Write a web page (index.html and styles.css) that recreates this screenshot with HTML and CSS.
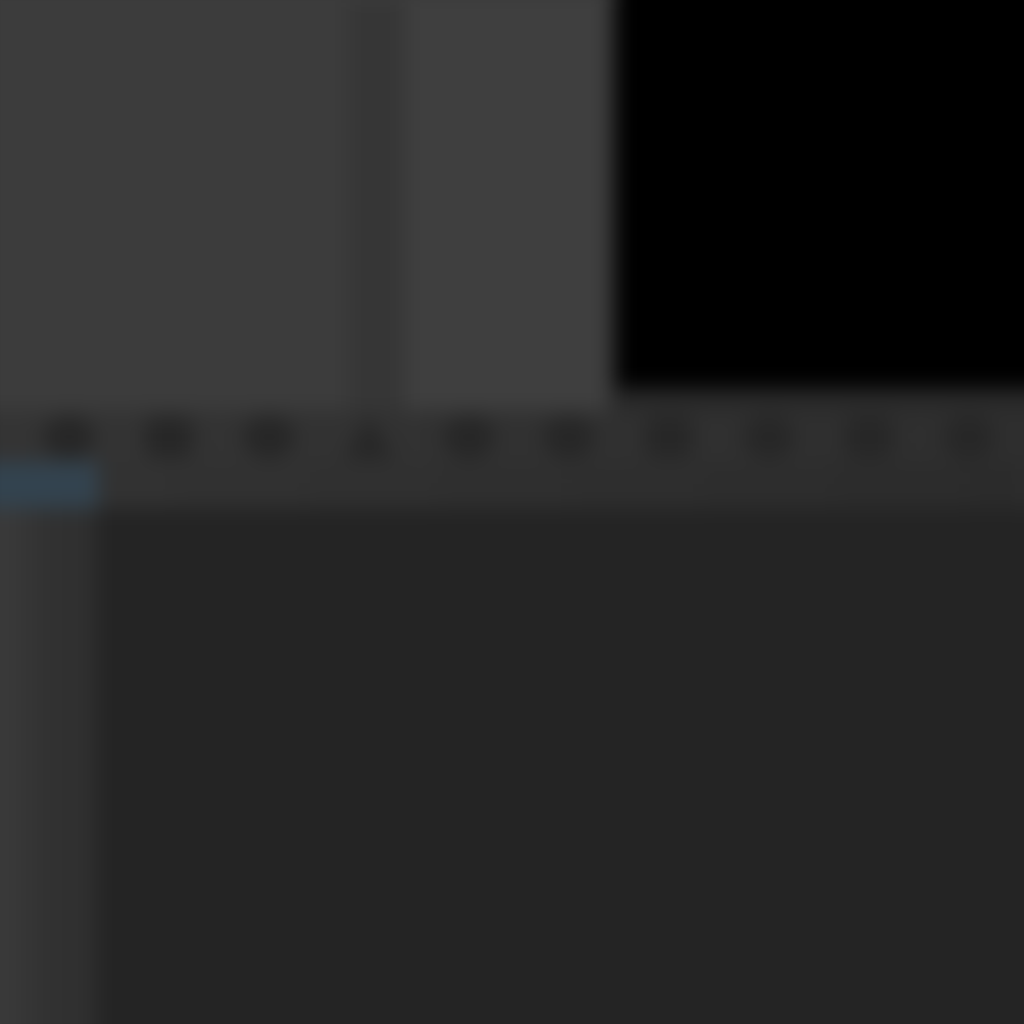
FILE: index.html
```html
<!DOCTYPE html>
<html lang="en">
<head>
<meta charset="utf-8">
<title>Editor</title>
<link rel="stylesheet" href="styles.css">
</head>
<body>
<div class="stage">
  <section class="top">
    <div class="panel-a"></div>
    <div class="divider"></div>
    <div class="panel-b"></div>
    <div class="viewport-area"><div class="viewport"></div></div>
  </section>
  <section class="toolbar">
    <div class="icons">
      <span class="ic"><svg viewBox="0 0 60 50"><ellipse cx="30" cy="25" rx="26" ry="22"/></svg></span>
      <span class="ic"><svg viewBox="0 0 60 50"><rect x="6" y="4" width="48" height="42" rx="10"/></svg></span>
      <span class="ic"><svg viewBox="0 0 60 50"><ellipse cx="30" cy="25" rx="26" ry="22"/></svg></span>
      <span class="ic"><svg viewBox="0 0 60 50"><path d="M30 3l25 44H5z"/></svg></span>
      <span class="ic"><svg viewBox="0 0 60 50"><ellipse cx="30" cy="25" rx="26" ry="22"/></svg></span>
      <span class="ic"><svg viewBox="0 0 60 50"><ellipse cx="30" cy="25" rx="26" ry="22"/></svg></span>
      <span class="ic"><svg viewBox="0 0 60 50"><rect x="6" y="4" width="48" height="42" rx="10"/></svg></span>
      <span class="ic"><svg viewBox="0 0 60 50"><ellipse cx="30" cy="25" rx="26" ry="22"/></svg></span>
      <span class="ic"><svg viewBox="0 0 60 50"><rect x="6" y="4" width="48" height="42" rx="10"/></svg></span>
      <span class="ic"><svg viewBox="0 0 60 50"><ellipse cx="30" cy="25" rx="26" ry="22"/></svg></span>
    </div>
    <div class="tabs">
      <div class="tab active"></div>
      <div class="tab-rest"></div>
    </div>
  </section>
  <section class="bottom">
    <aside class="sidebar"></aside>
    <main class="main"></main>
  </section>
</div>
</body>
</html>
```
FILE: styles.css
```css
html, body {
  margin: 0;
  padding: 0;
  background: #2c2c2c;
  overflow: hidden;
  width: 1024px;
  height: 1024px;
}
.stage {
  width: 1064px;
  height: 1064px;
  margin: -20px;
  padding: 20px;
  box-sizing: border-box;
  display: flex;
  flex-direction: column;
  filter: blur(10px);
  background: #2c2c2c;
  font-family: "Liberation Sans", Arial, sans-serif;
}
.top {
  display: flex;
  height: 410px;
  flex: none;
  margin: -20px -20px 0 -20px;
  padding: 20px 20px 0 20px;
  background: #3c3c3c;
}
.panel-a { width: 348px; background: #3c3c3c; }
.divider { width: 57px; background: #363636; }
.panel-b { width: 205px; background: #3f3f3f; }
.viewport-area {
  flex: 1;
  background: #292929;
  margin-right: -20px;
  padding-left: 6px;
  display: flex;
  flex-direction: column;
}
.viewport { height: 408px; margin-top: -20px; background: #000; }
.toolbar {
  flex: none;
  height: 98px;
  display: flex;
  flex-direction: column;
  background: linear-gradient(90deg, #343434 0%, #313131 50%, #2e2e2e 100%);
  margin: 0 -20px;
  padding: 0 20px;
}
.icons {
  height: 52px;
  flex: none;
  display: flex;
  align-items: flex-end;
  padding-left: 38px;
  gap: 38px;
}
.ic { flex: none; width: 62px; height: 50px; display: flex; justify-content: center; align-items: center; }
.ic svg { width: 62px; height: 50px; fill: #272727; }
.tabs { flex: 1; display: flex; margin-left: -20px; }
.tab.active { width: 118px; background: #33434f; }
.tab-rest { flex: 1; background: linear-gradient(90deg, #323232 0%, #2b2b2b 100%); }
.bottom {
  flex: 1;
  display: flex;
  margin: 0 -20px -20px -20px;
}
.sidebar { width: 116px; background: linear-gradient(90deg, #3a3a3a 20%, #313131 60%, #2f2f2f 100%); }
.main { flex: 1; background: #242424; }
```
